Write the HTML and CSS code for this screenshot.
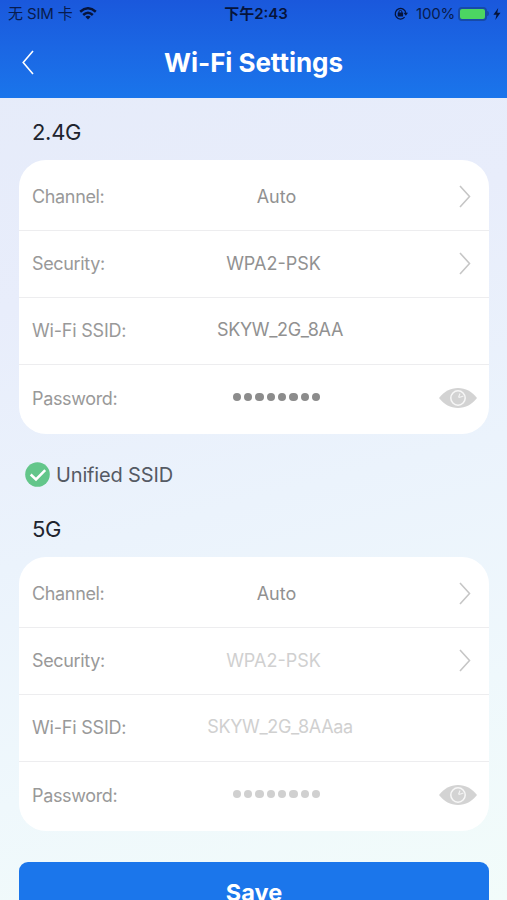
FILE: index.html
```html
<!DOCTYPE html>
<html lang="en">
<head>
<meta charset="utf-8">
<title>Wi-Fi Settings</title>
<link rel="stylesheet" href="styles.css">
</head>
<body>
<svg class="defs" aria-hidden="true">
  <symbol id="chevron" viewBox="0 0 12 23"><path d="M1 1L10.500 11.500L1 22" fill="none" stroke="currentColor" stroke-width="1.600"/></symbol>
  <symbol id="eye" viewBox="0 0 38 20">
    <path d="M0 10C5 3.500 11.500 0 19 0S33 3.500 38 10C33 16.500 26.500 20 19 20S5 16.500 0 10Z" fill="#d3d3d3"/>
    <circle cx="19" cy="10" r="7.200" fill="none" stroke="#f7f7f7" stroke-width="1.500"/>
    <path d="M19.500 9.500L21 5.500M20 9.500L24.500 8" fill="none" stroke="#f4f4f4" stroke-width="1.100"/>
  </symbol>
</svg>
<div class="screen">
  <header class="header">
    <div class="status">
      <div class="carrier"><span class="operator">无 SIM 卡</span>
        <svg class="wifi" viewBox="0 0 18 13"><g fill="none" stroke="currentColor" stroke-width="2.500"><path d="M1.200 4.800Q9 -2.200 16.800 4.800"/><path d="M4.200 8Q9 3.600 13.800 8"/></g><path d="M6.300 9.800Q9 7.500 11.700 9.800L9 12.600Z" fill="currentColor"/></svg>
      </div>
      <div class="clock">下午2:43</div>
      <div class="power">
        <svg class="lock" viewBox="0 0 14 13"><path d="M10.600 10.200A5.300 5.300 0 1 1 11.800 5.800" fill="none" stroke="currentColor" stroke-width="1.300"/><path d="M9.500 5.700H14L11.800 8.700Z" fill="currentColor"/><rect x="3.700" y="5.600" width="5.400" height="4" rx=".5" fill="currentColor"/><path d="M4.900 6V4.900A1.500 1.500 0 0 1 7.900 4.900V6" fill="none" stroke="currentColor"/></svg>
        <span class="percent">100%</span>
        <span class="battery"></span><span class="nub"></span>
        <svg class="bolt" viewBox="0 0 8 12"><path d="M5.200 0L.4 6.800H3.500L2.300 12L7.500 4.800H4.300Z" fill="currentColor"/></svg>
      </div>
    </div>
    <div class="titlebar">
      <svg class="back" viewBox="0 0 12 25"><path d="M11 1L1.200 12.500L11 24" fill="none" stroke="currentColor" stroke-width="1.600"/></svg>
      <h1 class="title">Wi-Fi Settings</h1>
    </div>
  </header>
  <main class="content">
    <h2 class="band">2.4G</h2>
    <section class="card">
      <div class="row"><span class="label">Channel:</span><span class="value">Auto</span><svg class="chevron"><use href="#chevron"/></svg></div>
      <div class="row"><span class="label">Security:</span><span class="value mode">WPA2-PSK</span><svg class="chevron"><use href="#chevron"/></svg></div>
      <div class="row"><span class="label ssid">Wi-Fi SSID:</span><span class="value name">SKYW_2G_8AA</span></div>
      <div class="row"><span class="label">Password:</span><span class="value dots"><i></i><i></i><i></i><i></i><i></i><i></i><i></i><i></i></span><svg class="eye"><use href="#eye"/></svg></div>
    </section>
    <div class="unified"><svg class="check" viewBox="0 0 25 25"><circle cx="12.500" cy="12.500" r="12.300" fill="#63c68a"/><path d="M5.700 12.500L11 17.500L20.200 8.200" fill="none" stroke="#fff" stroke-width="2.500"/></svg><span>Unified SSID</span></div>
    <h2 class="band">5G</h2>
    <section class="card">
      <div class="row"><span class="label">Channel:</span><span class="value">Auto</span><svg class="chevron"><use href="#chevron"/></svg></div>
      <div class="row"><span class="label">Security:</span><span class="value mode muted">WPA2-PSK</span><svg class="chevron"><use href="#chevron"/></svg></div>
      <div class="row"><span class="label ssid">Wi-Fi SSID:</span><span class="value name muted">SKYW_2G_8AAaa</span></div>
      <div class="row"><span class="label">Password:</span><span class="value dots muted"><i></i><i></i><i></i><i></i><i></i><i></i><i></i><i></i></span><svg class="eye"><use href="#eye"/></svg></div>
    </section>
    <button class="save">Save</button>
  </main>
</div>
</body>
</html>
```
FILE: styles.css
```css
* { box-sizing: border-box; }
body { margin: 0; font-family: Inter, "Noto Sans CJK SC", sans-serif; }
.defs { display: none; }
.screen {
  height: 900px;
  overflow: hidden;
  background: linear-gradient(165deg, #e5ebf9 0%, #e8edfb 30%, #ebf3fc 55%, #eff8fc 78%, #f2fcfa 100%);
}
.header {
  height: 98px;
  background: linear-gradient(#1a58dc, #1b67e4 50%, #1a75eb);
  color: #fff;
}
.status {
  display: grid;
  grid-template-columns: 1fr auto 1fr;
  align-items: center;
  height: 27px;
  padding: 0 6px 0 8px;
  color: #081b4d;
  font-size: 15px;
}
.carrier { display: flex; align-items: center; gap: 6px; white-space: nowrap; }
.operator { padding-bottom: 2px; letter-spacing: -.15px; }
.wifi { width: 18px; height: 13px; color: #06143b; }
.clock { padding: 0 0 2px 3px; font-weight: 600; color: #06143b; }
.power { display: flex; align-items: center; justify-content: flex-end; }
.lock { width: 14px; height: 13px; margin-right: 8px; color: #06143b; }
.percent { margin-right: 3px; letter-spacing: -.2px; }
.battery {
  width: 29px;
  height: 14px;
  border: 2px solid #174aa8;
  border-radius: 4px;
  background: #4cd562;
}
.nub { width: 2px; height: 5px; border-radius: 0 2px 2px 0; background: #174aa8; }
.bolt { width: 8px; height: 12px; margin-left: 4px; color: #06143b; }
.titlebar {
  display: grid;
  grid-template-columns: 40px 1fr 40px;
  align-items: center;
  height: 71px;
}
.back { width: 12px; height: 25px; margin-left: 22px; }
.title { margin: 0; text-align: center; font-size: 26px; font-weight: 700; line-height: 30px; letter-spacing: -.05px; }
.content { padding: 0 18px 0 19px; }
.band { height: 62px; margin: 0; padding: 19px 0 0 13px; font-size: 22px; font-weight: 400; line-height: 30px; letter-spacing: -.3px; color: #20242e; }
.card { height: 274px; border-radius: 27px; background: #fff; }
.row {
  display: grid;
  grid-template-columns: 144px 1fr 100px;
  align-items: center;
  height: 67px;
  padding: 0 12px 1px 13px;
  border-bottom: 1px solid #ededef;
  font-size: 18px;
  color: #999;
}
.row:first-child { height: 71px; padding-top: 3px; }
.row:last-child { border-bottom: 0; }
.label { letter-spacing: -.35px; }
.ssid { letter-spacing: -.2px; }
.value { text-align: center; color: #919191; white-space: nowrap; }
.mode { padding-right: 6px; }
.name { padding: 0 0 2px 7px; letter-spacing: -.35px; }
.chevron { justify-self: end; width: 12px; height: 23px; margin-right: 6px; color: #c6c6c6; }
.eye { justify-self: end; width: 38px; height: 20px; }
.dots { display: flex; justify-content: center; gap: 3px; padding-bottom: 2px; }
.dots i { width: 8.300px; height: 8.300px; border-radius: 50%; background: #8c8c8c; }
.muted { color: #d0d0d0; }
.dots.muted i { background: #d0d0d0; }
.unified { display: flex; align-items: center; gap: 6px; height: 61px; padding: 20px 0 0 6px; font-size: 20px; letter-spacing: -.15px; color: #555a64; }
.check { width: 25px; height: 25px; }
.save {
  display: block;
  width: 100%;
  height: 60px;
  margin-top: 31px;
  padding: 1px 0 0;
  border: 0;
  border-radius: 9px;
  background: #1b76eb;
  color: #fff;
  font: 700 23.500px/60px Inter, sans-serif;
}
```
